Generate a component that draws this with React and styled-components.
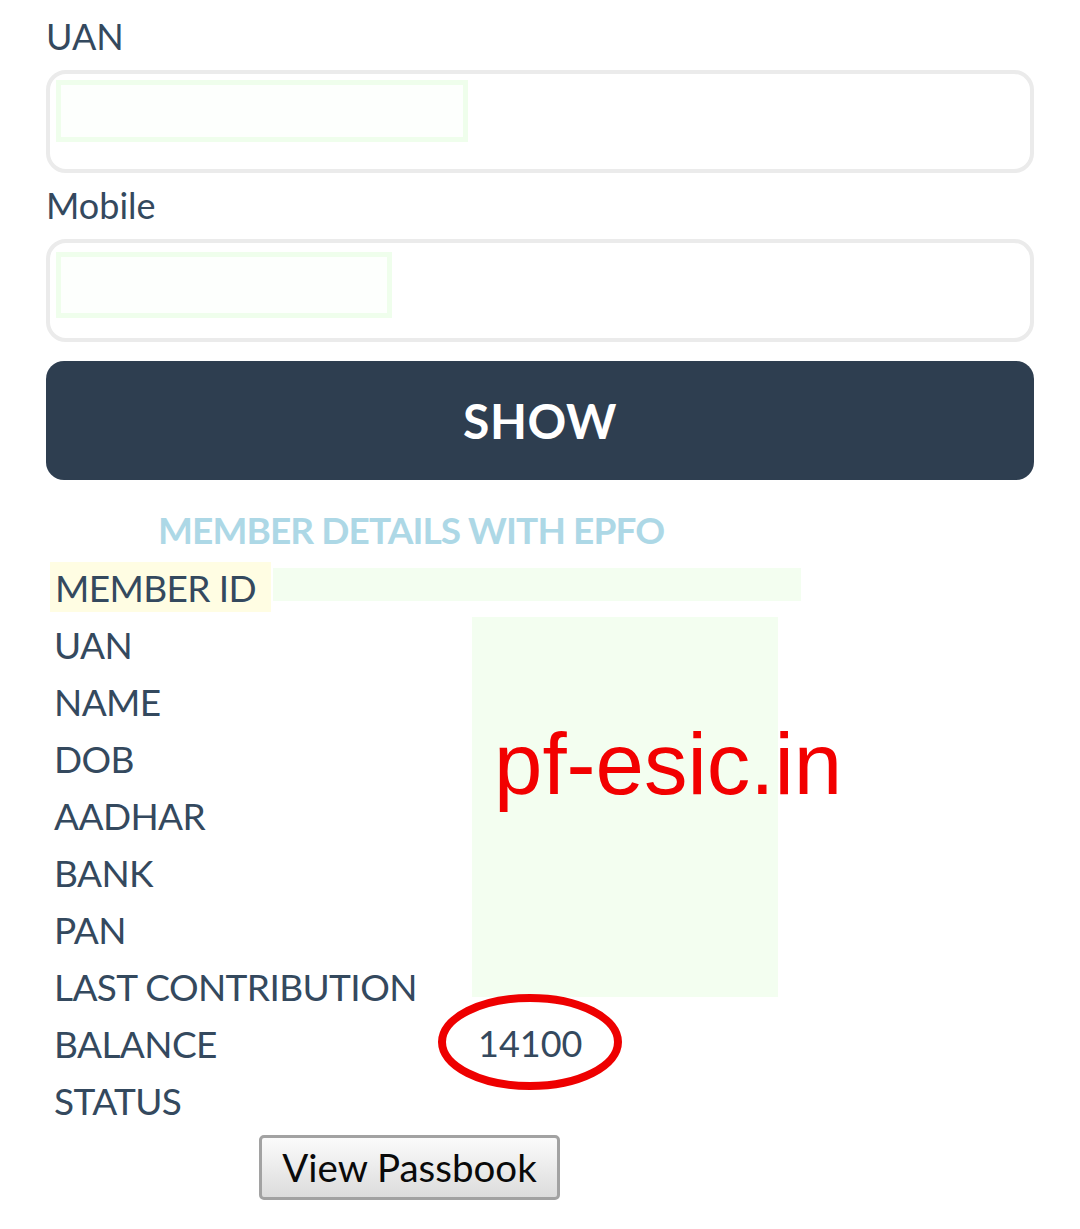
import React from 'react'
import styled, { createGlobalStyle } from 'styled-components'

const GlobalStyle = createGlobalStyle`
  body {
    margin: 0;
    background: #fff;
    font-family: Lato, "Open Sans", sans-serif;
    color: #34495e;
  }
`

const Page = styled.div`
  padding: 15px 46px 0;
  width: 1080px;
  box-sizing: border-box;
`

const FieldLabel = styled.div`
  font-size: 36px;
  line-height: 1.2;
  margin-bottom: 12px;
`

const InputBox = styled.div`
  box-sizing: border-box;
  height: 103px;
  border: 4px solid #ebebeb;
  border-radius: 20px;
  padding: ${p => p.$top}px 0 0 6px;
  margin-bottom: 11px;
`

const Autofill = styled.div`
  box-sizing: border-box;
  width: ${p => p.$w}px;
  height: ${p => p.$h}px;
  border: 5px solid #effeec;
  background: #fdfffd;
`

const ShowButton = styled.button`
  display: block;
  width: 100%;
  height: 119px;
  margin-top: 19px;
  border: none;
  border-radius: 18px;
  background: #2e3e50;
  color: #fff;
  font-family: Lato, sans-serif;
  font-weight: 700;
  font-size: 48px;
  letter-spacing: 0.5px;
`

const Heading = styled.h3`
  margin: 28px 0 0 112px;
  font-size: 37px;
  line-height: 1.2;
  font-weight: 700;
  letter-spacing: -0.9px;
  color: #add8e6;
`

const IdRow = styled.div`
  display: flex;
  align-items: center;
  height: 57px;
  margin-top: 6px;
  margin-left: 4px;
`

const IdLabel = styled.div`
  background: #fffde3;
  height: 50px;
  display: flex;
  align-items: center;
  padding: 0 15px 0 5px;
  font-size: 37px;
  letter-spacing: -0.6px;
`

const IdValue = styled.div`
  width: 528px;
  height: 33px;
  margin-left: 2px;
  margin-top: -6px;
  background: #f3fef0;
`

const DetailGrid = styled.div`
  display: grid;
  grid-template-columns: 417px 1fr;
  grid-auto-rows: 57px;
  margin-left: 8px;
`

const Label = styled.div`
  grid-column: 1;
  display: flex;
  align-items: center;
  font-size: 37px;
  letter-spacing: -0.6px;
  white-space: nowrap;
`

const Masked = styled.div`
  grid-column: 2;
  grid-row: 1 / span 8;
  width: 306px;
  height: 380px;
  margin-top: 1px;
  margin-left: 1px;
  background: #f3fef0;
  position: relative;
`

const Watermark = styled.span`
  position: absolute;
  left: 22px;
  top: 103px;
  font-family: "Liberation Sans", Arial, sans-serif;
  font-size: 87px;
  line-height: 1;
  color: #f20000;
  white-space: nowrap;
`

const Value = styled.div`
  grid-column: 2;
  position: relative;
  display: flex;
  align-items: center;
  padding-left: 7px;
  font-size: 36px;
`

const Circle = styled.svg`
  position: absolute;
  left: -36px;
  top: -23px;
`

const PassbookButton = styled.button`
  margin: 6px 0 0 213px;
  width: 301px;
  height: 65px;
  border: 3px solid #a2a2a2;
  border-radius: 5px;
  background: linear-gradient(#fbfbfb, #dcdcdc);
  font-family: Lato, sans-serif;
  font-size: 38.5px;
  color: #0a0a0a;
  padding: 0;
`

const labels = ['UAN', 'NAME', 'DOB', 'AADHAR', 'BANK', 'PAN', 'LAST CONTRIBUTION', 'BALANCE', 'STATUS']

export default function App() {
  return (
    <>
      <GlobalStyle />
      <Page>
        <FieldLabel>UAN</FieldLabel>
        <InputBox $top={6}>
          <Autofill $w={412} $h={62} />
        </InputBox>
        <FieldLabel>Mobile</FieldLabel>
        <InputBox $top={9}>
          <Autofill $w={336} $h={66} />
        </InputBox>
        <ShowButton>SHOW</ShowButton>

        <Heading>MEMBER DETAILS WITH EPFO</Heading>
        <IdRow>
          <IdLabel>MEMBER ID</IdLabel>
          <IdValue />
        </IdRow>
        <DetailGrid>
          {labels.map((l, i) => (
            <Label key={l} style={{ gridRow: i + 1 }}>{l}</Label>
          ))}
          <Masked>
            <Watermark>pf-esic.in</Watermark>
          </Masked>
          <Value style={{ gridRow: 8 }}>
            14100
            <Circle width="190" height="100" viewBox="0 0 190 100">
              <ellipse cx="95" cy="50" rx="88" ry="44" fill="none" stroke="#ee0000" strokeWidth="8" />
            </Circle>
          </Value>
        </DetailGrid>
        <PassbookButton>View Passbook</PassbookButton>
      </Page>
    </>
  )
}
